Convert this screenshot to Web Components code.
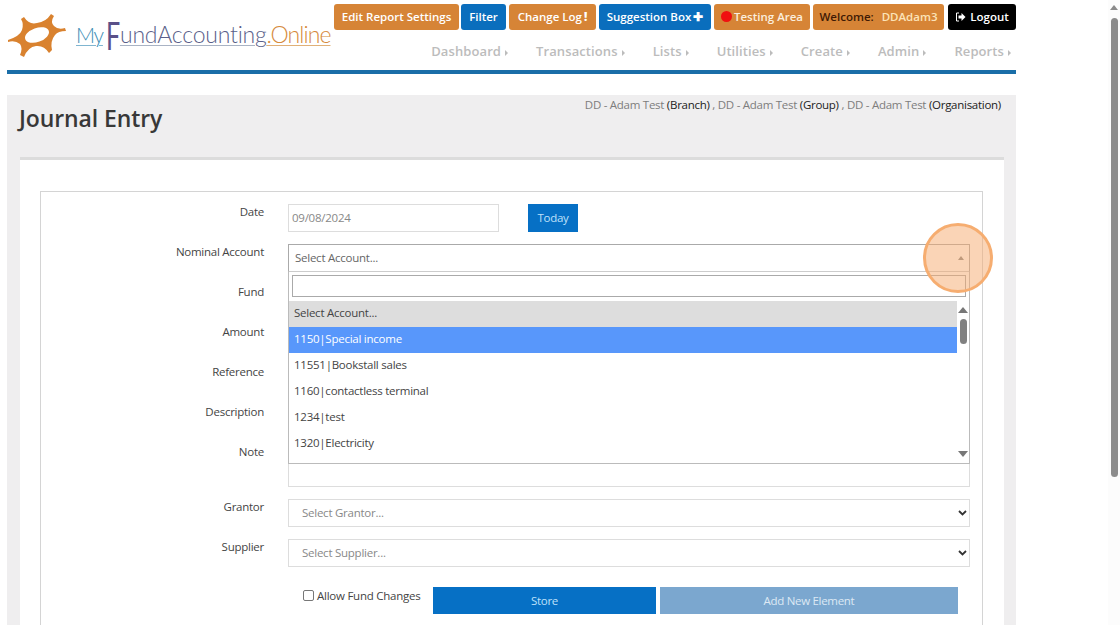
<!DOCTYPE html>
<html>
<head>
<meta charset="utf-8">
<title>Journal Entry</title>
<style>
    html, body { margin: 0; height: 625px; overflow: hidden; background: #fff; }
    body { font: 11.5px "Open Sans", "Liberation Sans", sans-serif; color: #444; letter-spacing: -.25px; }
</style>
</head>
<body>
<app-shell>
    <site-header>
        <header-button color="orange" w="125">Edit Report Settings</header-button>
        <header-button color="blue" w="45">Filter</header-button>
        <header-button color="orange" w="87">Change Log <b>!</b></header-button>
        <header-button color="blue" w="112">Suggestion Box <b>✚</b></header-button>
        <header-button color="orange" w="96" dot>Testing Area</header-button>
        <header-button color="orange" w="131" welcome>Welcome: <i>DDAdam3</i></header-button>
        <header-button color="black" w="68" logout>Logout</header-button>
        <nav-item slot="nav">Dashboard</nav-item>
        <nav-item slot="nav">Transactions</nav-item>
        <nav-item slot="nav">Lists</nav-item>
        <nav-item slot="nav">Utilities</nav-item>
        <nav-item slot="nav">Create</nav-item>
        <nav-item slot="nav">Admin</nav-item>
        <nav-item slot="nav">Reports</nav-item>
    </site-header>
    <journal-panel>
        <form-row label="Date">
            <date-field value="09/08/2024"></date-field>
        </form-row>
        <form-row label="Nominal Account">
            <account-picker></account-picker>
        </form-row>
        <form-row label="Fund"><plain-select></plain-select></form-row>
        <form-row label="Amount"><plain-select></plain-select></form-row>
        <form-row label="Reference"><plain-select></plain-select></form-row>
        <form-row label="Description"><plain-select></plain-select></form-row>
        <form-row label="Note"><plain-select tall></plain-select></form-row>
        <form-row label="Grantor"><plain-select text="Select Grantor..." arrow></plain-select></form-row>
        <form-row label="Supplier"><plain-select text="Select Supplier..." arrow></plain-select></form-row>
        <form-actions></form-actions>
    </journal-panel>
</app-shell>

<script>
class AppShell extends HTMLElement {
    constructor() {
        super();
        this.attachShadow({ mode: 'open' });
        this.shadowRoot.innerHTML = `
            <style>
                :host { display: flex; height: 625px; overflow: hidden; }
                .main { width: 1009px; margin-left: 7px; }
                .gutter { flex: 1; }
                .bar { width: 12px; display: flex; flex-direction: column; align-items: center; padding-top: 5px; box-sizing: border-box; background: #fcfcfc; }
                .arrow { width: 0; height: 0; border: 4px solid transparent; border-top: 0; border-bottom: 5px solid #8a8a8a; }
                .thumb { width: 7px; height: 459px; margin-top: 8px; background: #8c8c8c; border-radius: 4px; }
            </style>
            <div class="main"><slot></slot></div>
            <div class="gutter"></div>
            <div class="bar"><div class="arrow"></div><div class="thumb"></div></div>
        `;
    }
}

class SiteHeader extends HTMLElement {
    constructor() {
        super();
        this.attachShadow({ mode: 'open' });
        this.shadowRoot.innerHTML = `
            <style>
                :host { display: block; height: 74px; box-sizing: border-box; border-bottom: 4px solid #1a6ea8; }
                .wrap { display: flex; justify-content: space-between; height: 70px; }
                .logo { display: flex; align-items: flex-start; width: 327px; flex: none; }
                .logo svg { margin: 11px 0 0 0; flex: none; }
                .name { margin: 17px 0 0 10px; font: 300 23px/34px Lato, "Liberation Sans", sans-serif; letter-spacing: -.2px; color: #5b5f8a; white-space: nowrap; }
                .name span { text-decoration: underline; text-decoration-thickness: 1px; text-underline-offset: 2px; text-decoration-color: #a9b3c4; }
                .name .my { color: #3b8db5; font-size: 21px; letter-spacing: -1.2px; text-decoration-color: #7fb5d0; }
                .name .f { display: inline-block; width: 14px; margin-left: 3px; color: #5a5088; font-size: 38px; font-weight: 400; line-height: 20px; letter-spacing: 0; vertical-align: -7px; text-decoration: none; transform: scaleX(.66); transform-origin: left; }
                .name .on { color: #d68a3c; letter-spacing: -.9px; text-decoration-color: #e0b078; }
                .right { display: flex; flex-direction: column; align-items: flex-end; padding-top: 4px; }
                .buttons { display: flex; gap: 3px; }
                .buttons ::slotted(:first-child) { margin-right: -1px; }
                .buttons ::slotted([logout]) { margin-left: 1px; }
                .nav { display: flex; gap: 28px; margin-top: 12px; padding-right: 5px; }
            </style>
            <div class="wrap">
                <div class="logo">
                    <svg width="59" height="48" viewBox="7 11 59 48">
                        <path fill="#d9822f" d="M8 40 Q20 36 22 30 Q24 24 21 19 L24 17 Q29 25 37 23 Q46 22 51 14 L54 16 Q50 22 54 26 Q58 30 65 28 L66 31 Q58 31 55 35 Q50 41 52 50 L49 53 Q44 45 36 46 Q28 47 24 57 L20 55 Q23 48 20 44 Q15 40 8 42 Z"/>
                        <ellipse cx="37" cy="35" rx="12.500" ry="7" transform="rotate(-20 37 35)" fill="#fff"/>
                    </svg>
                    <div class="name"><span class="my">My</span><span class="f">F</span><span>undAccounting</span><span class="on">.Online</span></div>
                </div>
                <div class="right">
                    <div class="buttons"><slot></slot></div>
                    <div class="nav"><slot name="nav"></slot></div>
                </div>
            </div>
        `;
    }
}

class HeaderButton extends HTMLElement {
    constructor() {
        super();
        this.attachShadow({ mode: 'open' });
    }

    connectedCallback() {
        const colors = { orange: '#d68436', blue: '#0a6ebd', black: '#000' };
        const dot = this.hasAttribute('dot') ? '<span class="dot"></span>' : '';
        const logout = this.hasAttribute('logout') ? `
            <svg width="11" height="10" viewBox="0 0 11 10"><path d="M4 1H1.5V9H4" fill="none" stroke="#fff" stroke-width="1"/><path d="M3.5 3.5H6.5V1L10.5 5L6.5 9V6.500H3.5Z" fill="#fff"/></svg>` : '';
        this.shadowRoot.innerHTML = `
            <style>
                :host { display: flex; align-items: center; justify-content: center; gap: 3px; width: ${this.getAttribute('w')}px; height: 26px; padding-bottom: 1px; box-sizing: border-box; border-radius: 3px; background: ${colors[this.getAttribute('color')]}; color: ${this.hasAttribute('welcome') ? '#3f1a05' : '#fff'}; font: 600 11.5px "Open Sans", sans-serif; letter-spacing: 0; white-space: nowrap; }
                :host([logout]) { gap: 4px; }
                :host([dot]) { gap: 2px; color: #fbeedd; }
                .dot { width: 11px; height: 11px; border-radius: 50%; background: #f01010; }
                ::slotted(i) { font-style: normal; color: #fce3b8; margin-left: 5px; }
                ::slotted(b) { font-weight: 800; margin-left: -1px; }
            </style>
            ${dot}${logout}<span><slot></slot></span>
        `;
    }
}

class NavItem extends HTMLElement {
    constructor() {
        super();
        this.attachShadow({ mode: 'open' });
        this.shadowRoot.innerHTML = `
            <style>
                :host { display: flex; align-items: center; gap: 4px; color: #bcbcbc; font: 600 13px/19px "Open Sans", sans-serif; letter-spacing: .1px; }
                .tri { width: 0; height: 0; border: 3px solid transparent; border-right: 0; border-left: 3px solid #bcbcbc; margin-top: 2px; }
            </style>
            <span><slot></slot></span><span class="tri"></span>
        `;
    }
}

class JournalPanel extends HTMLElement {
    constructor() {
        super();
        this.attachShadow({ mode: 'open' });
        this.shadowRoot.innerHTML = `
            <style>
                :host { display: block; margin-top: 21px; height: 560px; background: #efeeef; padding: 0 12px 0 13px; box-sizing: border-box; }
                .top { display: flex; justify-content: space-between; height: 62px; }
                h1 { margin: 5px 0 0 -1px; font: 600 23px/36px "Open Sans", sans-serif; letter-spacing: -.1px; color: #383838; }
                .crumbs { margin: 2px 3px 0 0; line-height: 16px; color: #7d7d7d; letter-spacing: -.27px; }
                .crumbs b { font-weight: 400; color: #222; }
                .card { background: #fff; border-top: 3px solid #dcdcdc; padding: 31px 21px 0 20px; height: 480px; }
                .box { border: 1px solid #d4d4d4; padding: 12px 12px 0 0; height: 460px; }
            </style>
            <div class="top">
                <h1>Journal Entry</h1>
                <div class="crumbs">DD - Adam Test <b>(Branch)</b> , DD - Adam Test <b>(Group)</b> , DD - Adam Test <b>(Organisation)</b></div>
            </div>
            <div class="card"><div class="box"><slot></slot></div></div>
        `;
    }
}

class FormRow extends HTMLElement {
    constructor() {
        super();
        this.attachShadow({ mode: 'open' });
    }

    connectedCallback() {
        this.shadowRoot.innerHTML = `
            <style>
                :host { display: grid; grid-template-columns: 223px 1fr; column-gap: 24px; margin-bottom: 12px; }
                label { text-align: right; line-height: 16px; color: #444; }
            </style>
            <label>${this.getAttribute('label')}</label>
            <div><slot></slot></div>
        `;
    }
}

class DateField extends HTMLElement {
    constructor() {
        super();
        this.attachShadow({ mode: 'open' });
    }

    connectedCallback() {
        this.shadowRoot.innerHTML = `
            <style>
                :host { display: flex; gap: 29px; }
                .input { width: 211px; height: 28px; box-sizing: border-box; border: 1px solid #ddd; padding-left: 3px; line-height: 25px; color: #888; }
                button { width: 50px; height: 28px; border: 0; padding: 0 0 2px; background: #0670c5; color: #bfe0fa; font: 11.5px "Open Sans", sans-serif; letter-spacing: -.3px; }
            </style>
            <div class="input">${this.getAttribute('value')}</div>
            <button>Today</button>
        `;
    }
}

class PlainSelect extends HTMLElement {
    constructor() {
        super();
        this.attachShadow({ mode: 'open' });
    }

    connectedCallback() {
        const text = this.getAttribute('text') || '';
        const arrow = this.hasAttribute('arrow') ? '<svg width="9" height="6" viewBox="0 0 9 6"><path d="M1 1L4.500 4.500L8 1" fill="none" stroke="#333" stroke-width="1.800"/></svg>' : '';
        this.shadowRoot.innerHTML = `
            <style>
                :host { display: flex; align-items: center; justify-content: space-between; height: 28px; box-sizing: border-box; border: 1px solid #ddd; padding: 0 2px 0 13px; color: #888; }
                :host([tall]) { height: 43px; }
                span { margin-bottom: 2px; }
            </style>
            <span>${text}</span>${arrow}
        `;
    }
}

class AccountPicker extends HTMLElement {
    constructor() {
        super();
        this.attachShadow({ mode: 'open' });
        const accounts = ['1150|Special income', '11551|Bookstall sales', '1160|contactless terminal', '1234|test', '1320|Electricity'];
        const options = accounts.map((a, i) => `<li class="${i === 0 ? 'on' : ''}">${a}</li>`).join('');
        this.shadowRoot.innerHTML = `
            <style>
                :host { display: block; position: relative; height: 28px; }
                .head { display: flex; align-items: center; justify-content: space-between; height: 28px; box-sizing: border-box; border: 1px solid #aaa; border-bottom-color: #ccc; padding: 0 5px 2px 6px; color: #666; }
                .up { width: 0; height: 0; border: 3.500px solid transparent; border-top: 0; border-bottom: 4px solid #888; margin-top: 2px; }
                .drop { position: absolute; z-index: 2; left: 0; right: 0; top: 28px; height: 192px; box-sizing: border-box; background: #fff; border: 1px solid #bbb; border-top: 0; padding-top: 3px; }
                .search { height: 22px; margin: 0 3px; box-sizing: border-box; border: 1px solid #aaa; }
                .list { display: flex; margin-top: 4px; }
                ul { list-style: none; margin: 0; padding: 0; flex: 1; }
                li { height: 26px; line-height: 24px; padding-left: 5px; color: #444; }
                li.title { background: #ddd; }
                li.on { background: #5897fb; color: #fff; }
                .scroll { width: 12px; height: 162px; display: flex; flex-direction: column; align-items: center; padding-top: 6px; box-sizing: border-box; }
                .au, .ad { width: 0; height: 0; border: 5px solid transparent; }
                .au { border-top: 0; border-bottom: 6px solid #777; }
                .ad { border-bottom: 0; border-top: 6px solid #777; margin-top: auto; margin-bottom: 6px; }
                .th { width: 7px; height: 25px; margin-top: 6px; background: #808080; border-radius: 4px; }
                .spot { position: absolute; z-index: 3; right: -23px; top: -21px; width: 70px; height: 70px; box-sizing: border-box; border-radius: 50%; border: 3px solid #f6ad70; background: rgba(245, 170, 110, .5); }
            </style>
            <div class="head"><span>Select Account...</span><span class="up"></span></div>
            <div class="drop">
                <div class="search"></div>
                <div class="list">
                    <ul><li class="title">Select Account...</li>${options}</ul>
                    <div class="scroll"><span class="au"></span><span class="th"></span><span class="ad"></span></div>
                </div>
            </div>
            <div class="spot"></div>
        `;
    }
}

class FormActions extends HTMLElement {
    constructor() {
        super();
        this.attachShadow({ mode: 'open' });
        this.shadowRoot.innerHTML = `
            <style>
                :host { display: flex; margin: 20px 0 0 262px; }
                label { display: flex; align-items: flex-start; width: 130px; line-height: 18px; color: #444; }
                .box { width: 9px; height: 9px; margin: 3px 3px 0 0; border: 1px solid #777; border-radius: 2px; flex: none; }
                button { height: 27px; border: 0; padding: 0 0 1px; font: 11.5px "Open Sans", sans-serif; letter-spacing: -.3px; }
                .store { width: 223px; margin-right: 4px; background: #0670c5; color: #bfe0fa; }
                .add { width: 298px; background: #7ba7cf; color: #dde9f4; }
            </style>
            <label><span class="box"></span>Allow Fund Changes</label>
            <button class="store">Store</button>
            <button class="add">Add New Element</button>
        `;
    }
}

customElements.define('app-shell', AppShell);
customElements.define('site-header', SiteHeader);
customElements.define('header-button', HeaderButton);
customElements.define('nav-item', NavItem);
customElements.define('journal-panel', JournalPanel);
customElements.define('form-row', FormRow);
customElements.define('date-field', DateField);
customElements.define('plain-select', PlainSelect);
customElements.define('account-picker', AccountPicker);
customElements.define('form-actions', FormActions);
</script>
</body>
</html>
